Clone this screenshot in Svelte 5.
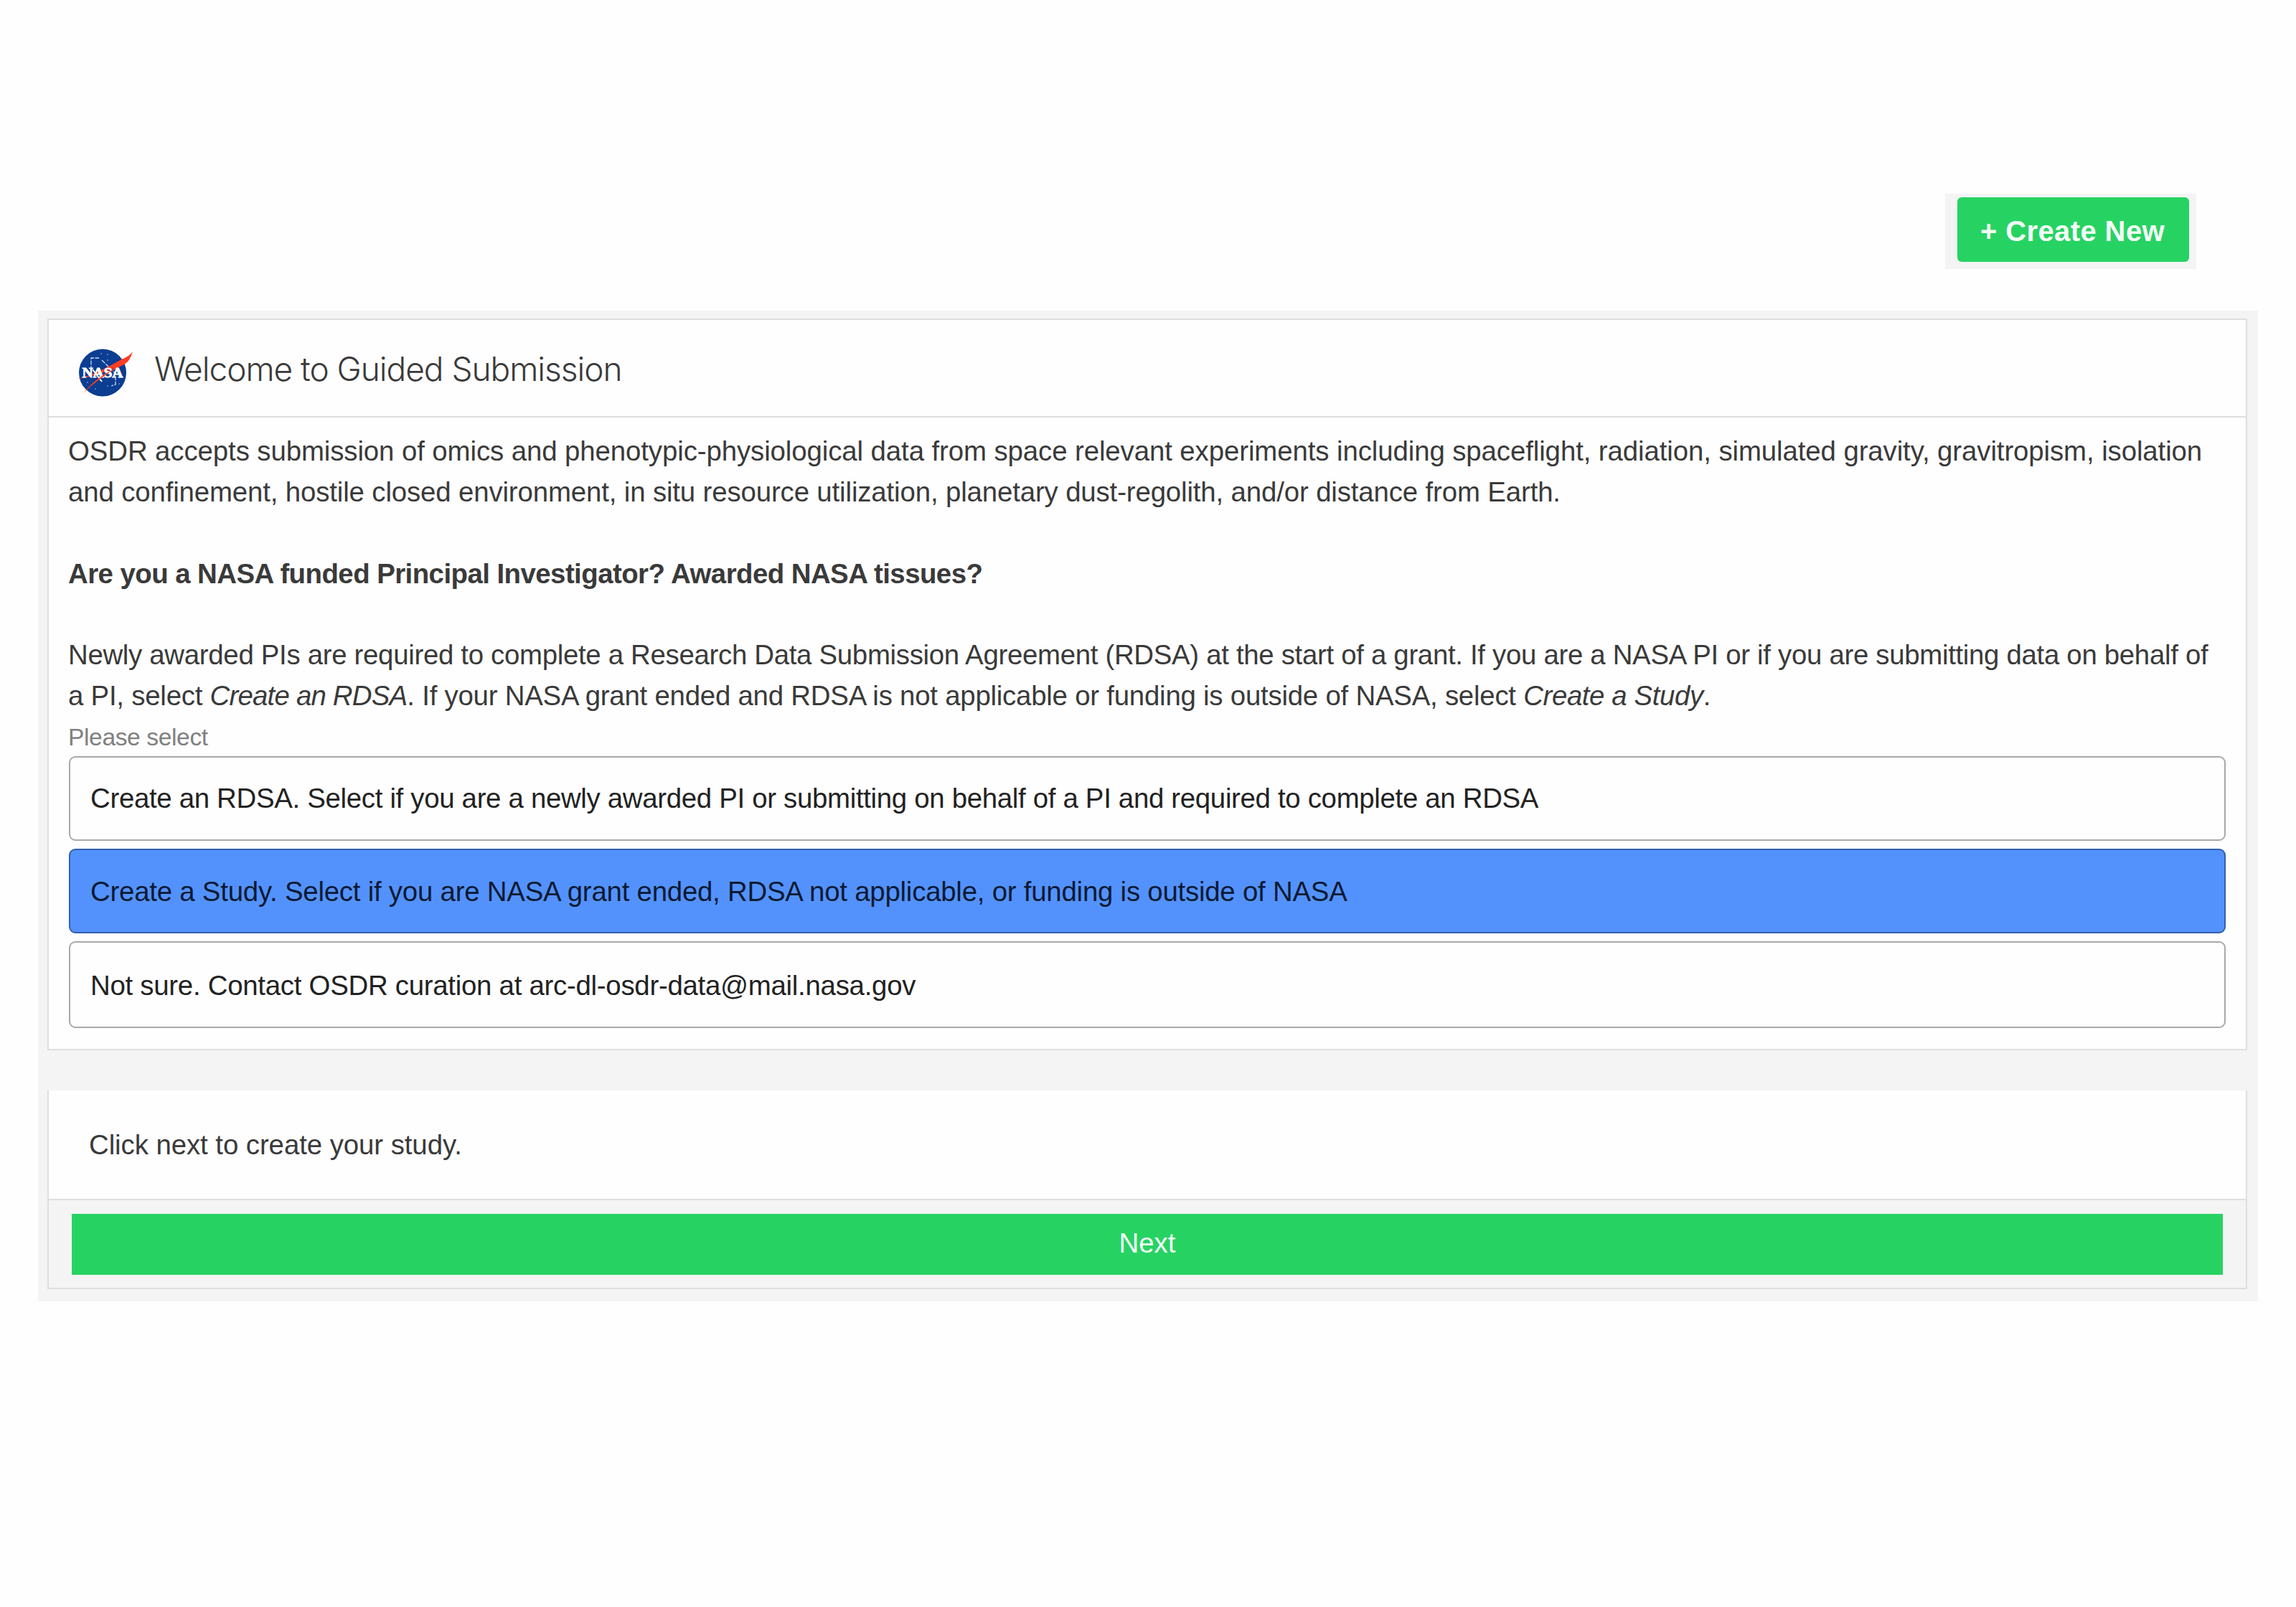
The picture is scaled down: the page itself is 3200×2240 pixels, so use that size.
<script>
  const options = [
    { id: 'rdsa', text: 'Create an RDSA. Select if you are a newly awarded PI or submitting on behalf of a PI and required to complete an RDSA' },
    { id: 'study', text: 'Create a Study. Select if you are NASA grant ended, RDSA not applicable, or funding is outside of NASA' },
    { id: 'unsure', text: 'Not sure. Contact OSDR curation at arc-dl-osdr-data@mail.nasa.gov' }
  ];
  let selected = $state('study');
</script>

<main class="page">
  <div class="toolbar">
    <div class="create-frame"><button class="create">+ Create New</button></div>
  </div>

  <section class="panel">
    <article class="card">
      <header class="card-head">
        <svg class="logo" viewBox="0 0 82 68" aria-label="NASA">
          <circle cx="38" cy="34.5" r="33" fill="#0b3d91" />
          <path d="M22 31V14H33M37 17L56 36V51L50 53" fill="none" stroke="#cfdcf2" stroke-width="1.3" stroke-dasharray="6 1.5" />
          <path d="M24 30L37 47" fill="none" stroke="#fff" stroke-width="2" />
          <g fill="#6f8fc4">
            <circle cx="36" cy="8" r="1" /><circle cx="45" cy="9" r="1" /><circle cx="45" cy="17" r="1" />
            <circle cx="17" cy="48" r="1" /><circle cx="28" cy="57" r="1" /><circle cx="45" cy="53" r="1" /><circle cx="61" cy="50" r="1" />
          </g>
          <path d="M1 43.500C26 38 50 24 65 15.500Q75 12 80 5Q76 19 68 23C46 34 26 48 11 63C24 47 40 37 55 28C40 34 22 41 1 43.500Z" fill="#fc3d21" />
          <text x="9.500" y="40.500" textLength="57" lengthAdjust="spacingAndGlyphs" class="wordmark">NASA</text>
          <path d="M22 52C30 45 38 39 47 34" fill="none" stroke="#fc3d21" stroke-width="1.5" />
        </svg>
        <h1>Welcome to Guided Submission</h1>
      </header>
      <div class="card-body">
        <p>
          <span class="line l1">OSDR accepts submission of omics and phenotypic-physiological data from space relevant experiments including spaceflight, radiation, simulated gravity, gravitropism, isolation</span>
          <span class="line l2">and confinement, hostile closed environment, in situ resource utilization, planetary dust-regolith, and/or distance from Earth.</span>
        </p>
        <p class="question"><strong class="line l3">Are you a NASA funded Principal Investigator? Awarded NASA tissues?</strong></p>
        <p>
          <span class="line l4">Newly awarded PIs are required to complete a Research Data Submission Agreement (RDSA) at the start of a grant. If you are a NASA PI or if you are submitting data on behalf of</span>
          <span class="line l5">a PI, select <em class="tight">Create an RDSA</em>. If your NASA grant ended and RDSA is not applicable or funding is outside of NASA, select <em>Create a Study</em>.</span>
        </p>
        <div class="hint">Please select</div>
        <div class="options">
          {#each options as o (o.id)}
            <button class="option {o.id}" class:selected={selected === o.id} onclick={() => (selected = o.id)}>{o.text}</button>
          {/each}
        </div>
      </div>
    </article>

    <article class="card next-card">
      <div class="message">Click next to create your study.</div>
      <footer class="actions"><button class="next">Next</button></footer>
    </article>
  </section>
</main>

<style>
  :global(body) { margin: 0; background: #fefefe; }
  .page, .page * { box-sizing: border-box; }
  .page {
    width: 3200px; height: 2240px; padding: 270px 53px 0;
    font-family: "Liberation Sans", Arial, sans-serif; font-size: 38.4px; color: #3a3a3a;
  }
  button { font-family: inherit; cursor: pointer; margin: 0; }
  h1, p { margin: 0; }
  .toolbar { display: flex; justify-content: flex-end; padding-right: 86px; }
  .create-frame { width: 350px; height: 105px; background: #f4f4f4; padding: 5px 10px 0 17px; }
  .create {
    display: block; width: 100%; height: 90px; border: 0; border-radius: 6px; background: #26d362;
    color: #f4fdf7; font-size: 40px; font-weight: 700; letter-spacing: 0.4px; padding: 4px 2px 0 0;
  }
  .panel { margin-top: 58px; height: 1381px; background: #f4f4f4; padding: 11px 15px 0 13px; }
  .card { background: #fefefe; border: 2px solid #dedede; height: 1020px; }
  .card-head { display: flex; align-items: center; height: 136px; border-bottom: 2px solid #dedede; padding-left: 37px; }
  .logo { width: 82px; height: 68px; margin-top: 12px; flex: none; }
  .wordmark { font: 700 18px "Liberation Serif", serif; fill: #fff; stroke: #fff; stroke-width: 0.8px; }
  h1 { font: 300 46px/60px Inter, sans-serif; letter-spacing: -1.02px; margin-left: 28px; padding-top: 2px; white-space: nowrap; }
  .card-body { padding: 19px 28px 0 27px; }
  .line { display: block; white-space: nowrap; line-height: 56.7px; }
  .l1 { letter-spacing: -0.096px; }
  .l2 { letter-spacing: -0.14px; }
  .l3 { letter-spacing: -0.55px; }
  .l4 { letter-spacing: -0.31px; }
  .l5 { letter-spacing: -0.23px; }
  .l5 em { letter-spacing: -0.4px; }
  .l5 .tight { letter-spacing: -0.8px; }
  .question { padding: 58px 0 56px; }
  .hint { font-size: 33.6px; line-height: 40px; color: #808080; margin-top: 9px; letter-spacing: -0.38px; }
  .options { display: grid; grid-template-rows: 118px 118px 121px; gap: 11px; margin: 6px 0 0 1px; }
  .option {
    border: 2px solid #a9a9a9; border-radius: 9px; background: #fefefe; text-align: left;
    padding: 0 28px; font-size: 38.4px; color: #222; white-space: nowrap;
  }
  .rdsa { letter-spacing: -0.315px; }
  .study { letter-spacing: -0.228px; padding-top: 2px; }
  .unsure { letter-spacing: -0.27px; padding-top: 3px; }
  .option.selected { background: #5392fc; border-color: #305fae; color: #0b1a33; }
  .next-card { margin-top: 56px; height: 277px; border-top: 0; }
  .message { height: 151px; padding-left: 56px; line-height: 152px; letter-spacing: -0.07px; }
  .actions { border-top: 2px solid #dedede; background: #f4f4f4; height: 124px; padding: 19px 32px 0; }
  .next { display: block; width: 100%; height: 85px; border: 0; background: #26d362; color: #f4fdf7; font-size: 38.4px; padding-bottom: 4px; }
</style>
